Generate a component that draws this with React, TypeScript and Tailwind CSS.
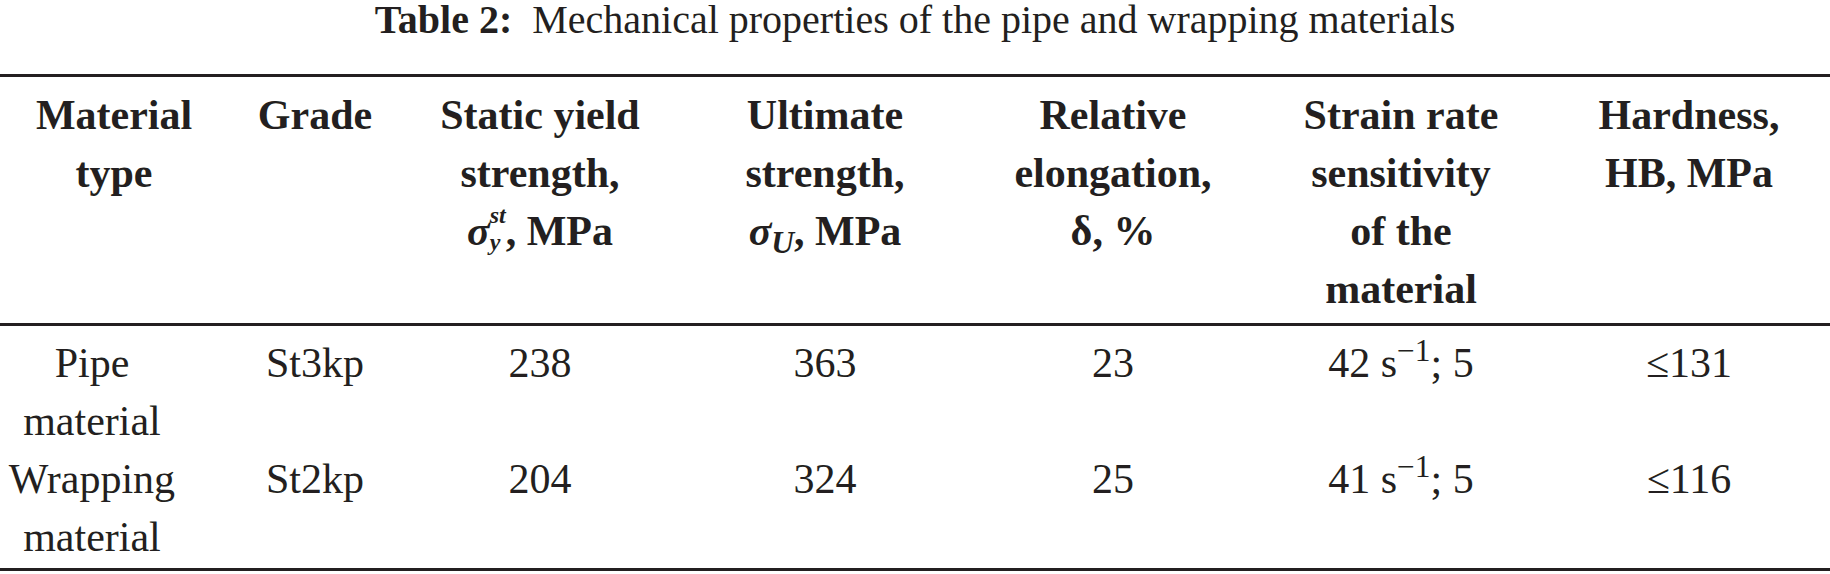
export default function App() {
  const cols = "grid grid-cols-[228px_174px_276px_294px_282px_294px_282px] text-center";

  return (
    <div className="h-[574px] w-[1830px] bg-white font-['Liberation_Serif',serif] text-[#231f20]">
      <p className="text-center text-[40px] leading-[40px]">
        <b>Table 2:</b>&nbsp; Mechanical properties of the pipe and wrapping materials
      </p>

      <div className="mt-[34px] border-t-[3px] border-[#231f20]" />

      {/* header */}
      <div className={`${cols} pt-[9px] pb-[5px] text-[42px] font-bold leading-[58px] whitespace-nowrap`}>
        <div>
          Material
          <br />
          type
        </div>
        <div>Grade</div>
        <div>
          Static yield
          <br />
          strength,
          <br />
          <span className="italic">σ</span>
          <span className="inline-flex flex-col text-left align-[22px] text-[24px] italic">
            <span className="leading-[16px]">st</span>
            <span className="leading-[38px]">y</span>
          </span>
          , MPa
        </div>
        <div>
          Ultimate
          <br />
          strength,
          <br />
          <span className="italic">σ</span>
          <sub className="italic">U</sub>, MPa
        </div>
        <div>
          Relative
          <br />
          elongation,
          <br />
          δ, %
        </div>
        <div>
          Strain rate
          <br />
          sensitivity
          <br />
          of the
          <br />
          material
        </div>
        <div>
          Hardness,
          <br />
          HB, MPa
        </div>
      </div>

      <div className="border-t-[3px] border-[#231f20]" />

      {/* body */}
      <div className={`${cols} pt-[8px] pb-[2px] text-[42px] leading-[58px] whitespace-nowrap`}>
        <div className="pr-[44px]">
          Pipe
          <br />
          material
        </div>
        <div>St3kp</div>
        <div>238</div>
        <div>363</div>
        <div>23</div>
        <div>
          42 s<sup>−1</sup>; 5
        </div>
        <div>≤131</div>

        <div className="pr-[44px]">
          Wrapping
          <br />
          material
        </div>
        <div>St2kp</div>
        <div>204</div>
        <div>324</div>
        <div>25</div>
        <div>
          41 s<sup>−1</sup>; 5
        </div>
        <div>≤116</div>
      </div>

      <div className="border-t-[3px] border-[#231f20]" />
    </div>
  );
}
